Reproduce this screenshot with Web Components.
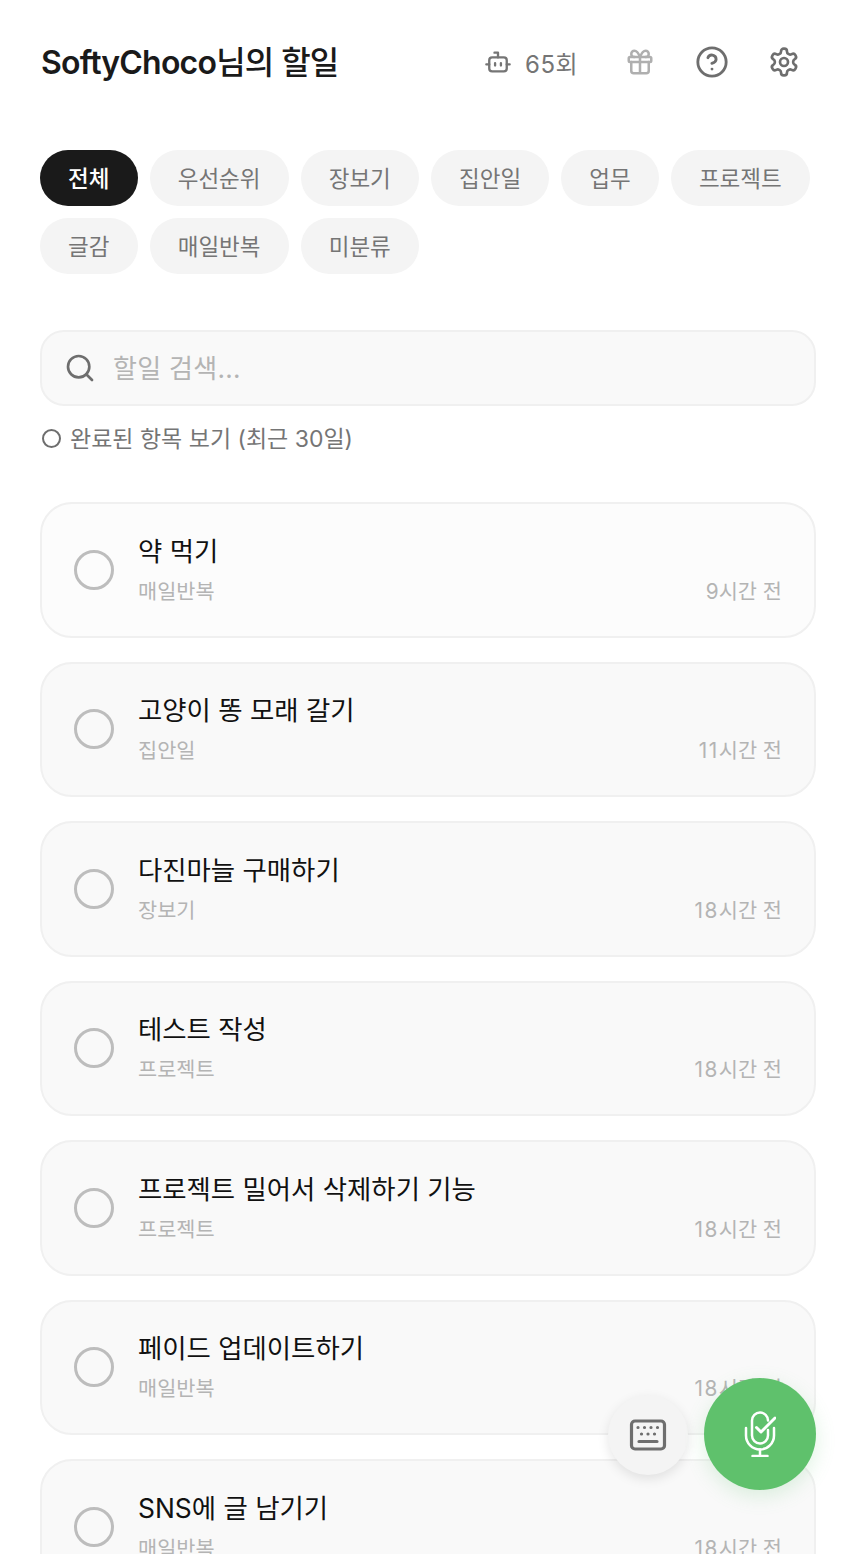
<!DOCTYPE html>
<html lang="ko">
<head>
<meta charset="utf-8">
<title>할일</title>
<style>
  html, body { margin: 0; height: 100%; overflow: hidden; background: #fff; }
  body { font-family: Inter, "Noto Sans CJK KR", sans-serif; }
</style>
</head>
<body>
<todo-app>
  <todo-header slot="header" name="SoftyChoco" count="65"></todo-header>
  <filter-bar slot="filters" items="전체,우선순위,장보기,집안일,업무,프로젝트,글감,매일반복,미분류" active="전체"></filter-bar>
  <search-box slot="search" placeholder="할일 검색..."></search-box>
  <done-toggle slot="search">완료된 항목 보기 (최근 30일)</done-toggle>
  <todo-card title="약 먹기" tag="매일반복" time="9시간 전" light></todo-card>
  <todo-card title="고양이 똥 모래 갈기" tag="집안일" time="11시간 전"></todo-card>
  <todo-card title="다진마늘 구매하기" tag="장보기" time="18시간 전"></todo-card>
  <todo-card title="테스트 작성" tag="프로젝트" time="18시간 전"></todo-card>
  <todo-card title="프로젝트 밀어서 삭제하기 기능" tag="프로젝트" time="18시간 전"></todo-card>
  <todo-card title="페이드 업데이트하기" tag="매일반복" time="18시간 전"></todo-card>
  <todo-card title="SNS에 글 남기기" tag="매일반복" time="18시간 전"></todo-card>
  <action-buttons slot="fab"></action-buttons>
</todo-app>

<script>
class TodoApp extends HTMLElement {
    constructor() {
        super();
        this.attachShadow({ mode: 'open' });
        this.shadowRoot.innerHTML = `
            <style>
                :host { display: block; width: 856px; height: 1554px; overflow: hidden; position: relative; }
                .page { padding: 0 40px; display: flex; flex-direction: column; }
                .list { display: flex; flex-direction: column; gap: 24px; margin-top: 48px; }
            </style>
            <div class="page">
                <slot name="header"></slot>
                <slot name="filters"></slot>
                <slot name="search"></slot>
                <div class="list"><slot></slot></div>
            </div>
            <slot name="fab"></slot>
        `;
    }
}

class TodoHeader extends HTMLElement {
    constructor() {
        super();
        this.attachShadow({ mode: 'open' });
    }

    connectedCallback() {
        const name = this.getAttribute('name') || '';
        const count = this.getAttribute('count') || '0';
        this.shadowRoot.innerHTML = `
            <style>
                :host { display: flex; align-items: center; justify-content: space-between; height: 60px; margin-top: 32px; }
                h1 { margin: 0 0 4px 1px; font-size: 32px; font-weight: 500; color: #1a1a1a; letter-spacing: -0.8px; white-space: nowrap; }
                h1 b { font-weight: 600; }
                .tools { display: flex; align-items: center; }
                .count { display: flex; align-items: center; gap: 13px; color: #757575; font-size: 24px; width: 92px; margin-right: 28px; white-space: nowrap; }
                .count em { font-style: normal; letter-spacing: .5px; }
                .btn { width: 72px; height: 60px; display: flex; align-items: center; justify-content: center; color: #6e6e6e; }
                .tools .btn:last-child { margin-right: -4px; }
                svg { display: block; flex: none; fill: none; stroke: currentColor; stroke-width: 2; stroke-linecap: round; stroke-linejoin: round; }
            </style>
            <h1><b>${name}</b>님의 할일</h1>
            <div class="tools">
                <div class="count">
                    <svg width="28" height="28" viewBox="0 0 24 24"><path d="M12 8V4H9"/><rect x="4.500" y="8" width="15" height="12" rx="2.500"/><path d="M2 14h2.500M19.500 14H22M9.500 13v2M14.500 13v2"/></svg>
                    <span><em>${count}</em>회</span>
                </div>
                <div class="btn" style="opacity:.55">
                    <svg width="30" height="30" viewBox="0 0 24 24"><rect x="3" y="8" width="18" height="4" rx="1"/><path d="M12 8v13M19 12v7a2 2 0 0 1-2 2H7a2 2 0 0 1-2-2v-7M7.500 8a2.500 2.500 0 0 1 0-5C10 3 12 8 12 8s2-5 4.500-5a2.500 2.500 0 0 1 0 5"/></svg>
                </div>
                <div class="btn">
                    <svg width="34" height="34" viewBox="0 0 24 24"><circle cx="12" cy="12" r="10"/><path d="M9.100 9a3 3 0 0 1 5.800 1c0 2-3 3-3 3M12 17h.01"/></svg>
                </div>
                <div class="btn">
                    <svg width="32" height="32" viewBox="0 0 24 24"><path d="M12.220 2h-.44a2 2 0 0 0-2 2v.18a2 2 0 0 1-1 1.730l-.43.250a2 2 0 0 1-2 0l-.15-.08a2 2 0 0 0-2.730.730l-.22.380a2 2 0 0 0 .730 2.730l.15.100a2 2 0 0 1 1 1.720v.510a2 2 0 0 1-1 1.740l-.15.090a2 2 0 0 0-.730 2.730l.22.380a2 2 0 0 0 2.730.730l.15-.08a2 2 0 0 1 2 0l.43.250a2 2 0 0 1 1 1.730V20a2 2 0 0 0 2 2h.44a2 2 0 0 0 2-2v-.18a2 2 0 0 1 1-1.730l.43-.250a2 2 0 0 1 2 0l.15.080a2 2 0 0 0 2.730-.730l.22-.390a2 2 0 0 0-.730-2.730l-.15-.080a2 2 0 0 1-1-1.740v-.500a2 2 0 0 1 1-1.740l.15-.090a2 2 0 0 0 .730-2.730l-.22-.380a2 2 0 0 0-2.730-.730l-.15.080a2 2 0 0 1-2 0l-.43-.250a2 2 0 0 1-1-1.730V4a2 2 0 0 0-2-2z"/><circle cx="12" cy="12" r="3"/></svg>
                </div>
            </div>
        `;
    }
}

class FilterBar extends HTMLElement {
    constructor() {
        super();
        this.attachShadow({ mode: 'open' });
    }

    connectedCallback() {
        const active = this.getAttribute('active');
        const items = (this.getAttribute('items') || '').split(',');
        const chips = items.map(item =>
            `<span class="chip ${item === active ? 'on' : ''}">${item}</span>`
        ).join('');
        this.shadowRoot.innerHTML = `
            <style>
                :host { display: flex; flex-wrap: wrap; gap: 12px; margin-top: 58px; }
                .chip { height: 56px; padding: 0 28.100px 3px; display: flex; align-items: center; border-radius: 28px; background: #f4f4f4; color: #757575; font-size: 22.500px; box-sizing: border-box; }
                .on { background: #1a1a1a; color: #fff; font-weight: 500; }
            </style>
            ${chips}
        `;
    }
}

class SearchBox extends HTMLElement {
    constructor() {
        super();
        this.attachShadow({ mode: 'open' });
    }

    connectedCallback() {
        this.shadowRoot.innerHTML = `
            <style>
                :host { display: flex; align-items: center; gap: 17px; height: 76px; margin-top: 56px; padding: 0 22px; box-sizing: border-box; border: 2px solid #f0f0f0; border-radius: 24px; background: #f9f9f9; color: #b4b4b4; font-size: 26px; }
                span { padding-bottom: 3px; letter-spacing: .3px; }
                svg { display: block; flex: none; fill: none; stroke: #6e6e6e; stroke-width: 2; stroke-linecap: round; }
            </style>
            <svg width="32" height="32" viewBox="0 0 24 24"><circle cx="11" cy="11" r="8"/><path d="m21 21-4.300-4.300"/></svg>
            <span>${this.getAttribute('placeholder') || ''}</span>
        `;
    }
}

class DoneToggle extends HTMLElement {
    constructor() {
        super();
        this.attachShadow({ mode: 'open' });
        this.shadowRoot.innerHTML = `
            <style>
                :host { display: flex; align-items: center; gap: 9px; height: 32px; margin-top: 16px; color: #757575; font-size: 23px; }
                i { width: 19px; height: 19px; box-sizing: border-box; border: 2px solid #6e6e6e; border-radius: 50%; margin-left: 2px; }
                span { padding-bottom: 2px; }
            </style>
            <i></i><span><slot></slot></span>
        `;
    }
}

class TodoCard extends HTMLElement {
    constructor() {
        super();
        this.attachShadow({ mode: 'open' });
    }

    connectedCallback() {
        const title = this.getAttribute('title') || '';
        const tag = this.getAttribute('tag') || '';
        // two digit numbers run wider in the original font
        const time = (this.getAttribute('time') || '').replace(/\d\d/, '<span class="n">$&</span>');
        this.shadowRoot.innerHTML = `
            <style>
                :host { display: flex; align-items: center; gap: 24px; height: 135.500px; flex: none; padding: 0 32px; box-sizing: border-box; border: 2px solid #f0f0f0; border-radius: 32px; background: #f9f9f9; }
                :host([light]) { background: #fcfcfc; }
                .check { width: 40px; height: 40px; flex: none; box-sizing: border-box; border: 3px solid #bdbdbd; border-radius: 50%; }
                .body { flex: 1; display: flex; flex-direction: column; gap: 8px; }
                .title { font-size: 26.400px; line-height: 36px; font-weight: 400; color: #111; }
                .row { display: flex; justify-content: space-between; font-size: 20.800px; line-height: 30px; color: #b4b4b4; }
                .n { letter-spacing: 1.500px; }
            </style>
            <div class="check"></div>
            <div class="body">
                <div class="title">${title}</div>
                <div class="row"><span>${tag}</span><span>${time}</span></div>
            </div>
        `;
    }
}

class ActionButtons extends HTMLElement {
    constructor() {
        super();
        this.attachShadow({ mode: 'open' });
        this.shadowRoot.innerHTML = `
            <style>
                :host { position: absolute; left: 608px; top: 1378px; width: 208px; height: 112px; display: flex; align-items: center; justify-content: space-between; }
                button { border: 0; padding: 0; border-radius: 50%; display: flex; align-items: center; justify-content: center; }
                .kb { width: 80px; height: 80px; background: #f4f4f4; box-shadow: 0 4px 12px rgba(0,0,0,.1); margin-top: 1px; }
                .mic { width: 112px; height: 112px; background: #5fc16c; box-shadow: 0 6px 20px rgba(95,193,108,.2); }
                svg { display: block; fill: none; stroke-linecap: round; stroke-linejoin: round; }
            </style>
            <button class="kb">
                <svg width="38" height="32" viewBox="0 0 38 32" stroke="#6e6e6e" stroke-width="3.200"><rect x="2.500" y="2" width="33" height="28" rx="3.500"/><path d="M9 8.500h.01M15.500 8.500h.01M22 8.500h.01M28.500 8.500h.01M12.500 15h.01M19 15h.01M25.500 15h.01M10 22.500h18"/></svg>
            </button>
            <button class="mic">
                <svg width="32" height="46" viewBox="0 0 32 46" stroke="#fff" stroke-width="2.500"><path d="M24 9V9.500a8 8 0 0 0-16 0v15a8 8 0 0 0 16 0V19"/><path d="M2 17v7.500a14 14 0 0 0 28 0V17"/><path d="M16 38.500V45M8.500 45h15"/><path d="m12.500 16.500 4.500 4.500L31 7" stroke-width="3"/></svg>
            </button>
        `;
    }
}

customElements.define('todo-app', TodoApp);
customElements.define('todo-header', TodoHeader);
customElements.define('filter-bar', FilterBar);
customElements.define('search-box', SearchBox);
customElements.define('done-toggle', DoneToggle);
customElements.define('todo-card', TodoCard);
customElements.define('action-buttons', ActionButtons);
</script>
</body>
</html>
